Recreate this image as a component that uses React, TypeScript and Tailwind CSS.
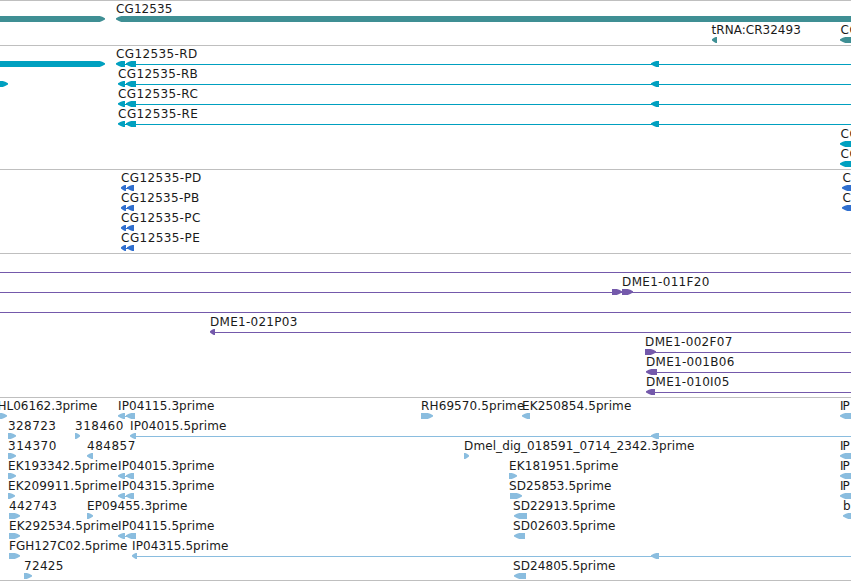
type Label = [text: string, start: number, end: number];
type Arrow = [direction: "l" | "r", start: number, end: number];
type Line = [start: number, end: number];
type Row = { labels?: Label[]; arrows?: Arrow[]; lines?: Line[] };
type Track = { id: string; color: string; rowClass: string; padClass: string; rows: Row[] };

const WIDTH = 851;
const OFF = 900;

const transcript = (name: string, extra: Arrow[] = []): Row => ({
  labels: [[name, 118.5, 197]],
  lines: [[120, WIDTH]],
  arrows: [...extra, ["l", 118, 125], ["l", 126, 136], ["l", 651, 659]],
});

const protein = (name: string, end: number, labels: Label[] = [], arrows: Arrow[] = []): Row => ({
  labels: [[name, 121.5, end], ...labels],
  lines: [[123, 130]],
  arrows: [["l", 121, 126], ["l", 127, 134], ...arrows],
});

const tracks: Track[] = [
  {
    id: "genes",
    color: "#3f8f94",
    rowClass: "h-[21px]",
    padClass: "pb-[2px]",
    rows: [
      { labels: [["CG12535", 116.5, 171.5]], arrows: [["r", -10, 105], ["l", 116, OFF]] },
      { labels: [["tRNA:CR32493", 712, 800], ["CG", 841, 858]], arrows: [["l", 712, 717], ["l", 840, OFF]] },
    ],
  },
  {
    id: "transcripts",
    color: "#00a0c0",
    rowClass: "h-5",
    padClass: "pb-[3px]",
    rows: [
      {
        labels: [["CG12535-RD", 116.5, 196.5]],
        lines: [[118, WIDTH]],
        arrows: [["r", -10, 105], ["l", 116, 125], ["l", 126, 136], ["l", 651, 659]],
      },
      transcript("CG12535-RB", [["r", -4, 8]]),
      transcript("CG12535-RC"),
      transcript("CG12535-RE"),
      { labels: [["CG", 841, 858]], arrows: [["l", 840, OFF]] },
      { labels: [["CG", 841, 858]], arrows: [["l", 840, OFF]] },
    ],
  },
  {
    id: "proteins",
    color: "#306fcf",
    rowClass: "h-5",
    padClass: "pb-[3px]",
    rows: [
      protein("CG12535-PD", 200.5, [["C", 843, 850]], [["l", 842, OFF]]),
      protein("CG12535-PB", 198.5, [["C", 843, 850]], [["l", 842, OFF]]),
      protein("CG12535-PC", 199.5),
      protein("CG12535-PE", 199),
    ],
  },
  {
    id: "clones",
    color: "#7459ab",
    rowClass: "h-5",
    padClass: "pb-[3px]",
    rows: [
      { lines: [[0, WIDTH]] },
      { labels: [["DME1-011F20", 622.5, 708.5]], lines: [[0, WIDTH]], arrows: [["r", 612, 622], ["r", 622, 633]] },
      { lines: [[0, WIDTH]] },
      { labels: [["DME1-021P03", 210.5, 296.5]], lines: [[212, WIDTH]], arrows: [["l", 210, 215]] },
      { labels: [["DME1-002F07", 645.5, 731.5]], lines: [[645, WIDTH]], arrows: [["r", 645, 656]] },
      { labels: [["DME1-001B06", 646.5, 733.5]], lines: [[650, WIDTH]], arrows: [["l", 646, 657]] },
      { labels: [["DME1-010I05", 646.5, 728.5]], lines: [[650, WIDTH]], arrows: [["l", 646, 655]] },
    ],
  },
  {
    id: "ests",
    color: "#8abddf",
    rowClass: "h-5",
    padClass: "pb-[2px]",
    rows: [
      {
        labels: [["HL06162.3prime", -2, 96.5], ["IP04115.3prime", 118.5, 213.5], ["RH69570.5prime", 421.5, 523.5], ["EK250854.5prime", 522.5, 630.5], ["IP", 840.5, 849]],
        lines: [[120, 130]],
        arrows: [["r", -4, 7], ["l", 118, 125], ["l", 126, 135], ["r", 421, 433], ["l", 522, 530], ["l", 840, OFF]],
      },
      {
        labels: [["328723", 8.5, 55], ["318460", 75.5, 122.5], ["IP04015.5prime", 130.5, 225.5]],
        lines: [[132, WIDTH]],
        arrows: [["r", 8, 16], ["r", 75, 80], ["l", 130, 136], ["l", 651, 659]],
      },
      {
        labels: [["314370", 8.5, 55.5], ["484857", 87.5, 134.5], ["Dmel_dig_018591_0714_2342.3prime", 464.5, 693.5], ["IP", 840.5, 849]],
        arrows: [["r", 8, 16], ["l", 87, 93], ["r", 464, 469], ["l", 840, OFF]],
      },
      {
        labels: [["EK193342.5prime", 8.5, 116.5], ["IP04015.3prime", 118.5, 213.5], ["EK181951.5prime", 509.5, 617.5], ["IP", 840.5, 849]],
        lines: [[120, 130]],
        arrows: [["r", 8, 16], ["l", 118, 125], ["l", 126, 134], ["r", 509, 517], ["l", 840, OFF]],
      },
      {
        labels: [["EK209911.5prime", 8.5, 116.5], ["IP04315.3prime", 118.5, 213.5], ["SD25853.5prime", 509.5, 610.5], ["IP", 840.5, 849]],
        lines: [[120, 130]],
        arrows: [["r", 8, 15], ["l", 118, 125], ["l", 126, 134], ["r", 510, 522], ["l", 840, OFF]],
      },
      {
        labels: [["442743", 9.5, 56], ["EP09455.3prime", 87.5, 186.5], ["SD22913.5prime", 513.5, 614.5], ["b", 843.5, 850]],
        arrows: [["r", 9, 20], ["r", 87, 93], ["l", 514, 527], ["l", 843, OFF]],
      },
      {
        labels: [["EK292534.5prime", 9.5, 117.5], ["IP04115.5prime", 118.5, 213.5], ["SD02603.5prime", 513.5, 614.5]],
        lines: [[120, 130]],
        arrows: [["r", 9, 20], ["l", 118, 125], ["l", 126, 136], ["l", 514, 525]],
      },
      {
        labels: [["FGH127C02.5prime", 9.5, 126.5], ["IP04315.5prime", 132.5, 227.5]],
        lines: [[134, WIDTH]],
        arrows: [["r", 9, 20], ["l", 132, 137], ["l", 651, 659]],
      },
      {
        labels: [["72425", 24.5, 62.5], ["SD24805.5prime", 513.5, 614.5]],
        arrows: [["r", 24, 32], ["l", 514, 526]],
      },
    ],
  },
];

/* A six pixel high block whose leading end narrows to a point. */
function arrowPoints([direction, start, end]: Arrow) {
  const head = Math.min(end - start, 7);
  const tip = direction === "l" ? start : end;
  const tail = direction === "l" ? end : start;
  const s = direction === "l" ? 1 : -1;
  return [
    [tip, 17.2],
    [tip + s * head * 0.4, 15.8],
    [tip + s * head * 0.75, 15],
    [tail, 15],
    [tail, 21],
    [tip + s * head * 0.75, 21],
    [tip + s * head * 0.4, 20],
    [tip, 18.6],
  ]
    .map((p) => p.join(","))
    .join(" ");
}

function FeatureRow({ row, color, className }: { row: Row; color: string; className: string }) {
  return (
    <div className={`${className} w-full`}>
      <svg width={WIDTH} height="22" className="block overflow-visible" fill={color}>
        {row.lines?.map(([a, b], i) => (
          <rect key={i} x={a} y="18" width={b - a} height="1" shapeRendering="crispEdges" />
        ))}
        {row.arrows?.map((arrow, i) => (
          <polygon key={i} points={arrowPoints(arrow)} />
        ))}
        {row.labels?.map(([text, a, b], i) => (
          <text key={i} x={a - 0.4} y="12" textLength={b - a + 1.2} className="fill-[#1a1a1a]">
            {text}
          </text>
        ))}
      </svg>
    </div>
  );
}

export default function App() {
  return (
    <main className="flex h-[581px] w-[851px] flex-col overflow-hidden border-b border-[#bfbfbf] bg-white font-['DejaVu_Sans',sans-serif] text-[12px]">
      {tracks.map((track) => (
        <section key={track.id} className={`shrink-0 border-t border-[#bfbfbf] ${track.padClass}`}>
          {track.rows.map((row, i) => (
            <FeatureRow key={i} row={row} color={track.color} className={track.rowClass} />
          ))}
        </section>
      ))}
    </main>
  );
}
